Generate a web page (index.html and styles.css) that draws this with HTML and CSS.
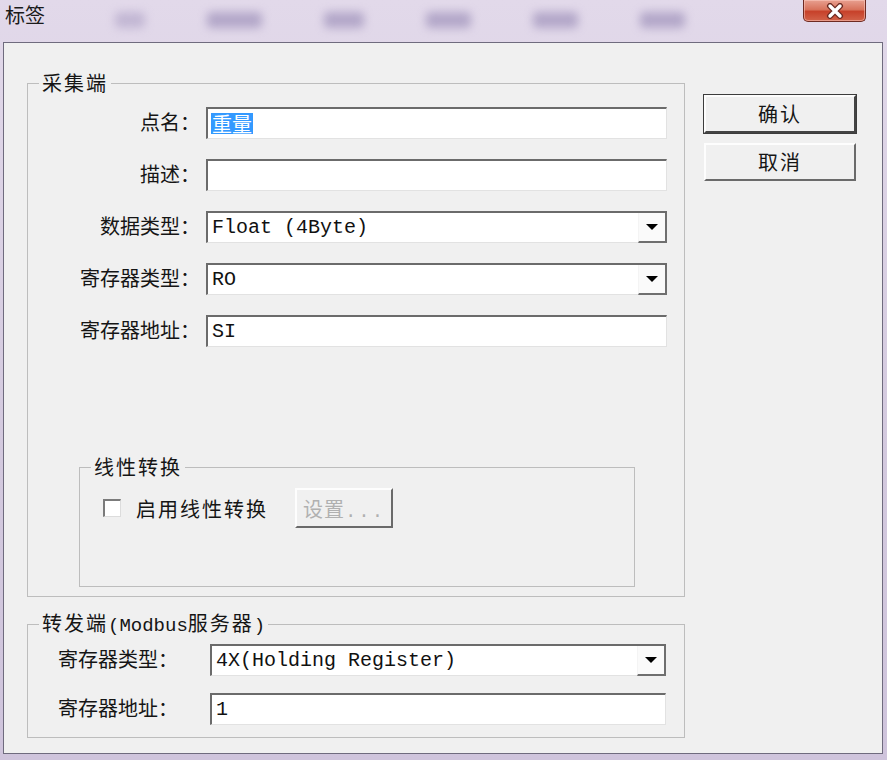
FILE: index.html
```html
<!DOCTYPE html>
<html lang="zh-CN">
  <head>
    <meta charset="UTF-8" />
    <meta name="viewport" content="width=device-width, initial-scale=1.0" />
    <title>标签</title>
    <link rel="stylesheet" href="styles.css">
  </head>
  <body>
    <div class="window">
      <div class="titlebar">
        <span class="title">标签</span>
        <div class="glass">
          <span class="blob b1"></span>
          <span class="blob b2"></span>
          <span class="blob b3"></span>
          <span class="blob b4"></span>
          <span class="blob b5"></span>
          <span class="blob b6"></span>
        </div>
        <div class="close">
          <svg width="20" height="16" viewBox="0 0 20 16">
            <path d="M5 3 L15 13 M15 3 L5 13" stroke="#6b2a22" stroke-width="6" stroke-linecap="round" />
            <path d="M5 3 L15 13 M15 3 L5 13" stroke="#fff" stroke-width="3.4" stroke-linecap="round" />
          </svg>
        </div>
      </div>

      <div class="client">
        <div class="main">
          <fieldset class="group collect">
            <legend>采集端</legend>
            <div class="form">
              <label>点名：</label>
              <div class="edit"><span class="sel">重量</span></div>

              <label>描述：</label>
              <div class="edit"></div>

              <label>数据类型：</label>
              <div class="edit combo"><span class="val">Float (4Byte)</span><span class="drop"><i></i></span></div>

              <label>寄存器类型：</label>
              <div class="edit combo"><span class="val">RO</span><span class="drop"><i></i></span></div>

              <label>寄存器地址：</label>
              <div class="edit"><span class="val">SI</span></div>
            </div>

            <fieldset class="group linear">
              <legend>线性转换</legend>
              <div class="check-row">
                <span class="checkbox"></span>
                <span class="check-label">启用线性转换</span>
                <button class="btn disabled">设置<span class="dots">...</span></button>
              </div>
            </fieldset>
          </fieldset>

          <fieldset class="group forward">
            <legend>转发端<span class="mono">(Modbus</span>服务器<span class="mono">)</span></legend>
            <div class="form form-forward">
              <label>寄存器类型：</label>
              <div class="edit combo"><span class="val">4X(Holding Register)</span><span class="drop"><i></i></span></div>

              <label>寄存器地址：</label>
              <div class="edit"><span class="val">1</span></div>
            </div>
          </fieldset>
        </div>

        <div class="actions">
          <button class="btn default">确认</button>
          <button class="btn">取消</button>
        </div>
      </div>
    </div>
  </body>
</html>
```

FILE: styles.css
```css
* {
  padding: 0;
  margin: 0;
  box-sizing: border-box;
}
body {
  width: 887px;
  height: 760px;
  overflow: hidden;
  background-color: #d8cfe2;
  color: #151515;
  font-family: "Noto Sans CJK SC", "Liberation Sans", sans-serif;
}
.window {
  height: 760px;
  display: flex;
  flex-direction: column;
  padding: 0 4px 6px 3px;
  background: linear-gradient(to bottom, #e2d9ea, #d3c9de 60%, #cfc4dc);
}

/* title bar */
.titlebar {
  height: 42px;
  display: flex;
  align-items: flex-start;
}
.title {
  font-size: 20px;
  line-height: 24px;
  padding: 3px 0 0 2px;
  color: #1a1a1a;
}
.glass {
  flex: 1;
  height: 40px;
  display: flex;
  align-items: center;
  gap: 62px;
  padding-left: 70px;
  filter: blur(5px);
  opacity: 0.55;
}
.blob {
  height: 16px;
  background-color: #8d7fae;
  border-radius: 4px;
}
.b1 { width: 30px; background-color: #a99cc2; }
.b2 { width: 55px; }
.b3 { width: 40px; }
.b4 { width: 45px; }
.b5 { width: 45px; }
.b6 { width: 45px; }
.close {
  width: 63px;
  height: 22px;
  margin-right: 17px;
  display: flex;
  align-items: center;
  justify-content: center;
  border: 1px solid #6e2a22;
  border-top: none;
  border-radius: 0 0 5px 5px;
  background: linear-gradient(to bottom, #e8a090 0%, #d8735c 45%, #c7412a 55%, #d2634a 100%);
  box-shadow: inset 0 0 0 1px rgba(255, 210, 200, 0.5);
}

/* client area */
.client {
  flex: 1;
  display: flex;
  align-items: flex-start;
  background-color: #f0f0f0;
  border: 1px solid #6f6b7e;
  padding: 28px 0 0 23px;
}
.main {
  width: 658px;
}
.group {
  border: 1px solid #bdbdbd;
}
.group legend {
  font-size: 20px;
  line-height: 24px;
  letter-spacing: 2px;
  padding: 0 3px;
  margin-left: 11px;
  color: #151515;
}
.mono {
  font-family: "Liberation Mono", monospace;
  font-size: 19px;
  letter-spacing: 0;
}
.collect {
  padding: 12px 17px 9px 0;
}
.form {
  display: grid;
  grid-template-columns: 172px 461px;
  grid-auto-rows: 32px;
  column-gap: 6px;
  row-gap: 20px;
}
.form label {
  font-size: 20px;
  line-height: 30px;
  text-align: right;
  white-space: nowrap;
}
.form-forward {
  grid-template-columns: 146px 456px;
  row-gap: 17px;
}
.form-forward label {
  text-align: left;
}

/* sunken edit box */
.edit {
  display: flex;
  align-items: center;
  background-color: #fff;
  border-top: 2px solid #6b6b6b;
  border-left: 2px solid #6b6b6b;
  border-right: 1px solid #e2e2e2;
  border-bottom: 1px solid #e2e2e2;
  padding-left: 3px;
}
.val {
  flex: 1;
  font-family: "Liberation Mono", monospace;
  font-size: 20px;
  line-height: 28px;
  padding-left: 1px;
  color: #111;
}
.sel {
  font-size: 20px;
  line-height: 21px;
  background-color: #3399ff;
  color: #fff;
  padding: 0 1px;
}
.combo {
  border-right: none;
}
.drop {
  width: 29px;
  align-self: stretch;
  display: flex;
  align-items: center;
  justify-content: center;
  background-color: #fafafa;
  border-left: 1px solid #f4f4f4;
  border-right: 2px solid #6f6f6f;
  border-bottom: 2px solid #6f6f6f;
  margin-bottom: -1px;
}
.drop i {
  width: 0;
  height: 0;
  border-left: 6px solid transparent;
  border-right: 6px solid transparent;
  border-top: 6px solid #000;
}

/* linear conversion group */
.linear {
  width: 556px;
  margin: 108px 0 0 51px;
  padding: 9px 0 58px 23px;
}
.linear legend {
  margin-left: -12px;
}
.check-row {
  height: 40px;
  display: flex;
  align-items: center;
}
.checkbox {
  width: 18px;
  height: 18px;
  background-color: #fff;
  border-top: 2px solid #7b7b7b;
  border-left: 2px solid #7b7b7b;
  border-right: 1px solid #dcdcdc;
  border-bottom: 1px solid #dcdcdc;
}
.check-label {
  font-size: 20px;
  letter-spacing: 2px;
  margin-left: 15px;
}

/* buttons */
.btn {
  font-family: "Noto Sans CJK SC", sans-serif;
  font-size: 20px;
  color: #151515;
  background-color: #f0f0f0;
  border-top: 2px solid #fdfdfd;
  border-left: 2px solid #fdfdfd;
  border-right: 2px solid #6a6a6a;
  border-bottom: 2px solid #6a6a6a;
  letter-spacing: 2px;
}
.btn.disabled {
  width: 98px;
  height: 40px;
  margin-left: 27px;
  color: #b0b0b0;
  letter-spacing: 1px;
}
.dots {
  font-family: "Liberation Mono", monospace;
  font-size: 19px;
  letter-spacing: 2px;
}
.forward {
  margin-top: 14px;
  padding: 6px 17px 12px 30px;
}
.forward legend {
  margin-left: -19px;
}
.actions {
  width: 152px;
  margin: 24px 0 0 19px;
  display: flex;
  flex-direction: column;
  gap: 10px;
}
.actions .btn {
  height: 38px;
  line-height: 30px;
}
.btn.default {
  outline: 1px solid #3c3c3c;
  border-right-color: #444;
  border-bottom-color: #444;
}
```
